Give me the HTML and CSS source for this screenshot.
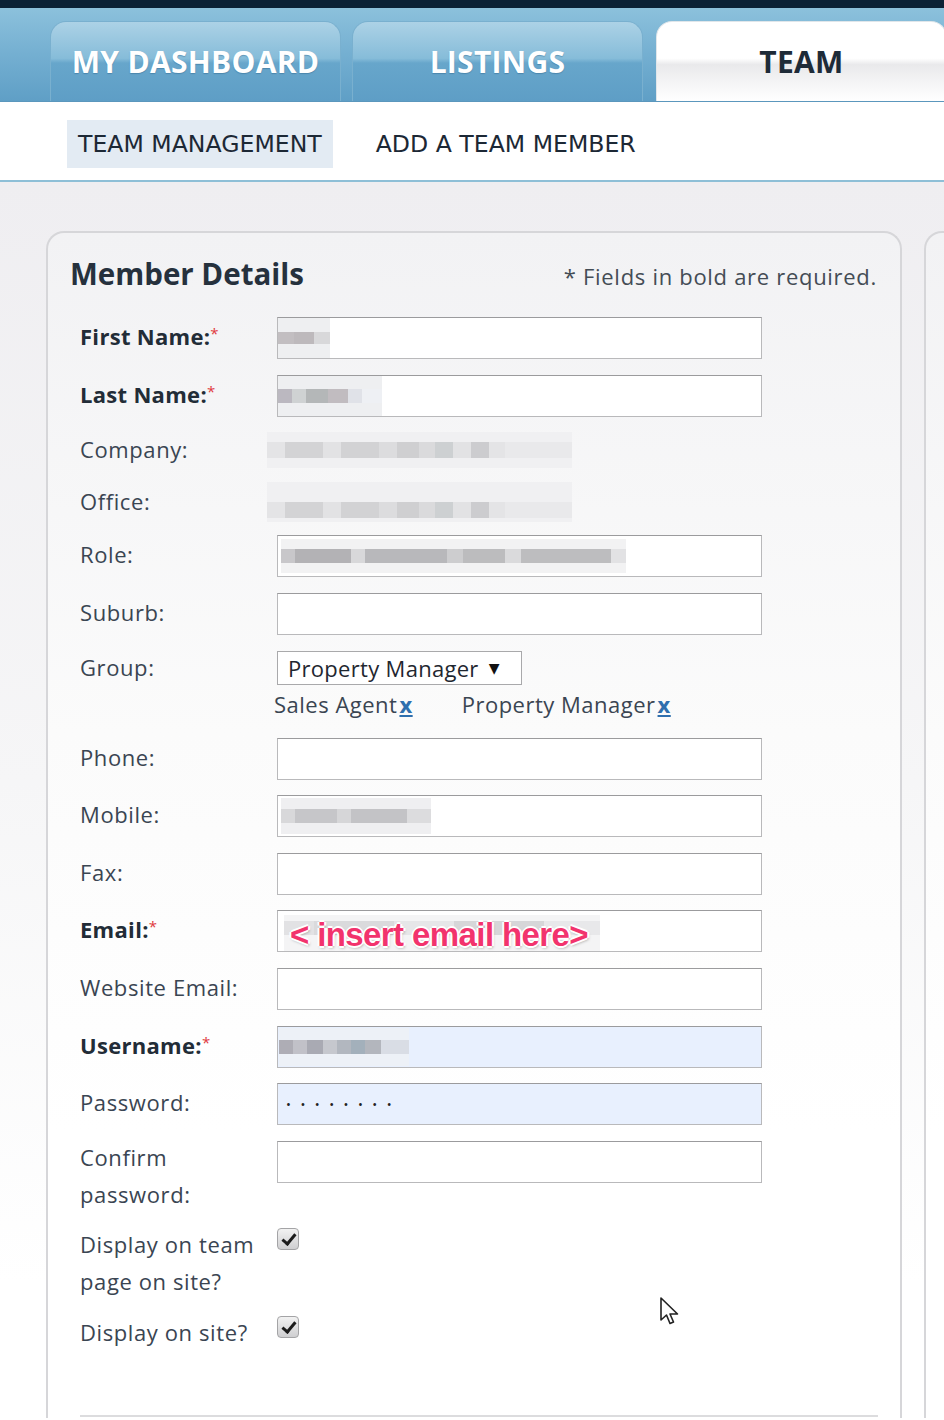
FILE: index.html
```html
<!DOCTYPE html>
<html>
<head>
    <title>Team - Member Details</title>
    <meta name="viewport" content="width=device-width, initial-scale=1">
    <link rel="stylesheet" href="styles.css">
</head>
<body>
    <div class="topbar"></div>

    <nav class="tabs">
        <a class="tab">MY DASHBOARD</a>
        <a class="tab">LISTINGS</a>
        <a class="tab active">TEAM</a>
    </nav>

    <nav class="subnav">
        <a class="subnav-item current">TEAM MANAGEMENT</a>
        <a class="subnav-item">ADD A TEAM MEMBER</a>
    </nav>

    <main class="content">
        <section class="card">
            <div class="card-head">
                <h2>Member Details</h2>
                <span class="note">* Fields in bold are required.</span>
            </div>

            <div class="form">
                <label class="req">First Name:<em>*</em></label>
                <div class="field"><span class="mosaic mosaic-first"></span></div>

                <label class="req">Last Name:<em>*</em></label>
                <div class="field"><span class="mosaic mosaic-last"></span></div>

                <label class="text-row">Company:</label>
                <div class="plain"><span class="mosaic mosaic-company"></span></div>

                <label class="text-row">Office:</label>
                <div class="plain"><span class="mosaic mosaic-office"></span></div>

                <label>Role:</label>
                <div class="field"><span class="mosaic mosaic-role"></span></div>

                <label>Suburb:</label>
                <div class="field"></div>

                <label class="group-label">Group:</label>
                <div class="group">
                    <div class="select">Property Manager <span class="arrow">&#9660;</span></div>
                    <div class="tags">
                        <span class="tag">Sales Agent<a>x</a></span>
                        <span class="tag">Property Manager<a>x</a></span>
                    </div>
                </div>

                <label>Phone:</label>
                <div class="field"></div>

                <label>Mobile:</label>
                <div class="field"><span class="mosaic mosaic-mobile"></span></div>

                <label>Fax:</label>
                <div class="field"></div>

                <label class="req">Email:<em>*</em></label>
                <div class="field">
                    <span class="mosaic mosaic-email"></span>
                    <span class="annotation">&lt; insert email here&gt;</span>
                </div>

                <label>Website Email:</label>
                <div class="field"></div>

                <label class="req">Username:<em>*</em></label>
                <div class="field autofill"><span class="mosaic mosaic-user"></span></div>

                <label>Password:</label>
                <div class="field autofill"><span class="dots">&bull;&bull;&bull;&bull;&bull;&bull;&bull;&bull;</span></div>

                <label class="multi">Confirm<br>password:</label>
                <div class="field"></div>

                <label class="multi">Display on team<br>page on site?</label>
                <div><span class="check"></span></div>

                <label class="multi">Display on site?</label>
                <div><span class="check"></span></div>
            </div>

            <div class="card-foot"></div>
        </section>

        <section class="card card-side"></section>
    </main>

    <svg class="cursor" width="24" height="32" viewBox="0 0 24 32">
        <path d="M2 2 L2 24 L7.5 19 L11 27.5 L14.5 26 L11 18 L18.5 18 Z" fill="#fff" stroke="#222" stroke-width="1.6" stroke-linejoin="round"/>
    </svg>
</body>
</html>
```

FILE: styles.css
```css
body {
    margin: 0;
    width: 944px;
    height: 1420px;
    overflow: hidden;
    font-family: "Open Sans", "DejaVu Sans", sans-serif;
    color: #3a4552;
    background: #fff;
    position: relative;
}
.topbar {
    height: 8px;
    background: #0b2236;
}

/* main tabs */
.tabs {
    display: flex;
    gap: 11px;
    height: 94px;
    padding-left: 50px;
    align-items: flex-end;
    background: linear-gradient(#8cc1dc, #74afd1 50%, #5f9fc6);
    border-bottom: 1px solid #5b97bd;
    box-sizing: border-box;
    overflow: hidden;
}
.tab {
    flex: 0 0 291px;
    height: 80px;
    box-sizing: border-box;
    border: 1px solid #79b0cf;
    border-bottom: none;
    border-radius: 16px 16px 0 0;
    background: linear-gradient(#acd2e6 0%, #86bcd9 46%, #67a6cb 52%, #5e9ec6 100%);
    color: #fff;
    font-weight: 700;
    font-size: 30px;
    letter-spacing: 0.3px;
    display: flex;
    align-items: center;
    justify-content: center;
    text-shadow: 0 1px 1px rgba(30, 80, 120, 0.35);
}
.tab.active {
    margin-left: 2px;
    background: linear-gradient(#fff 0%, #fff 46%, #e9e9eb 54%, #f6f6f7 80%, #fff 100%);
    border-color: #e0e6ea;
    color: #1e2b38;
    text-shadow: none;
}

/* sub navigation */
.subnav {
    height: 80px;
    display: flex;
    align-items: center;
    gap: 32px;
    padding: 6px 0 0 67px;
    background: #fff;
    border-bottom: 2px solid #8ebfd7;
    box-sizing: border-box;
}
.subnav-item {
    font-family: "DejaVu Sans", sans-serif;
    font-size: 23.6px;
    line-height: 26px;
    color: #1c2835;
    padding: 11px 11px;
}
.subnav-item.current {
    background: #e3ebf3;
}

/* content */
.content {
    display: flex;
    gap: 22px;
    padding: 49px 0 0 46px;
    height: 1236px;
    box-sizing: border-box;
    background: linear-gradient(#efeef1, #f6f6f7 600px, #fff 1100px);
}
.card {
    flex: 0 0 856px;
    box-sizing: border-box;
    border: 2px solid #d6d6d9;
    border-bottom: none;
    border-radius: 18px 18px 0 0;
    background: linear-gradient(#f2f2f4, #fbfbfb 500px, #fff 900px);
    padding: 18px 22px 0 22px;
}
.card-side {
    flex-basis: 300px;
}
.card-head {
    display: flex;
    justify-content: space-between;
    align-items: baseline;
    height: 46px;
}
.card-head h2 {
    margin: 0;
    font-size: 29.5px;
    line-height: 46px;
    font-weight: 700;
    color: #26313d;
}
.note {
    font-size: 22px;
    color: #444c55;
    letter-spacing: 0.7px;
    margin-right: 1px;
}

/* form grid */
.form {
    display: grid;
    grid-template-columns: 197px 485px;
    row-gap: 15.6px;
    margin-top: 20px;
    padding-left: 10px;
    align-items: start;
}
.form label {
    font-size: 22px;
    line-height: 38px;
    color: #3a4552;
    letter-spacing: 0.6px;
}
.form label.req {
    font-weight: 700;
    color: #222c37;
    letter-spacing: 0.3px;
}
.form label em {
    color: #e0393e;
    font-style: normal;
    font-weight: 400;
    font-size: 15px;
    line-height: 0;
    position: relative;
    top: -6px;
}
.form label.text-row {
    line-height: 34px;
}
.form label.multi {
    line-height: 37px;
    margin-top: -2px;
}
.form label.group-label {
    line-height: 32px;
}
.field {
    height: 42px;
    box-sizing: border-box;
    border: 1px solid #b9b9bb;
    border-top-color: #9b9b9d;
    background: #fff;
    position: relative;
    display: flex;
    align-items: center;
}
.field.autofill {
    background: #e8f0fe;
}
.plain {
    height: 36px;
    margin-left: -10px;
}
.dots {
    padding-left: 8px;
    font-size: 13px;
    letter-spacing: 9.5px;
    color: #222;
}

/* pixelated placeholders */
.mosaic {
    display: block;
    background-color: #eeeff1;
}
.mosaic-first {
    width: 52px;
    height: 40px;
    background-image: linear-gradient(to right, #c2bec1 0 16px, #bdb9bc 16px 36px, #d8d8da 36px);
    background-size: 100% 12px;
    background-position: 0 14px;
    background-repeat: no-repeat;
}
.mosaic-last {
    width: 104px;
    height: 40px;
    background-image: linear-gradient(to right, #bbb8c0 0 14px, #cfd2d3 14px 28px, #b4b7b8 28px 50px, #c1bcc0 50px 70px, #e0e2e8 70px 84px, #eef0f4 84px);
    background-size: 100% 14px;
    background-position: 0 13px;
    background-repeat: no-repeat;
}
.mosaic-company, .mosaic-office {
    width: 305px;
    height: 36px;
    background-color: #f0f0f2;
    background-image: linear-gradient(to right, #e4e4e6 0 18px, #d3d3d5 18px 56px, #e2e2e4 56px 74px, #d2d2d4 74px 112px, #dcdcde 112px 130px, #cfcfd1 130px 152px, #dadadc 152px 168px, #cdd0d2 168px 186px, #e2e2e4 186px 204px, #cccccf 204px 222px, #e4e4e6 222px 238px, #e9e9eb 238px 305px);
    background-size: 100% 16px;
    background-position: 0 10px;
    background-repeat: no-repeat;
}
.mosaic-office {
    margin-top: -2px;
    height: 40px;
    background-position: 0 20px;
}
.mosaic-role {
    width: 345px;
    height: 34px;
    margin-left: 3px;
    background-color: #f2f2f3;
    background-image: linear-gradient(to right, #c8c7ca 0 14px, #b3b2b5 14px 70px, #d8d8da 70px 84px, #b8b8bb 84px 166px, #cdcdcf 166px 182px, #bcbcbe 182px 224px, #dadadc 224px 240px, #bdbdbf 240px 330px, #e2e2e4 330px);
    background-size: 100% 14px;
    background-position: 0 10px;
    background-repeat: no-repeat;
}
.mosaic-mobile {
    width: 150px;
    height: 36px;
    margin-left: 3px;
    background-color: #efeff1;
    background-image: linear-gradient(to right, #d8d8da 0 14px, #c6c6c9 14px 56px, #d6d6d8 56px 70px, #c3c3c6 70px 126px, #dcdcde 126px);
    background-size: 100% 14px;
    background-position: 0 11px;
    background-repeat: no-repeat;
}
.mosaic-user {
    width: 130px;
    height: 38px;
    margin-left: 1px;
    background-color: #edf1f7;
    background-image: linear-gradient(to right, #aeadb5 0 14px, #c1c1c8 14px 28px, #a9aab3 28px 44px, #c6c8ce 44px 58px, #b2b7bf 58px 72px, #a3b0bb 72px 86px, #b3b6bd 86px 102px, #d9dde5 102px);
    background-size: 100% 14px;
    background-position: 0 12px;
    background-repeat: no-repeat;
}
.mosaic-email {
    position: absolute;
    left: 6px;
    top: 4px;
    width: 316px;
    height: 36px;
    background-color: #f4f4f5;
    background-image: linear-gradient(to right, #e2e2e4 0 30px, #dadadc 30px 110px, #e6e6e8 110px 170px, #d6d6d8 170px 260px, #e8e8ea 260px);
    background-size: 100% 14px;
    background-position: 0 6px;
    background-repeat: no-repeat;
}
.annotation {
    position: absolute;
    left: 12px;
    top: 5px;
    font-family: "Liberation Sans", Arial, sans-serif;
    font-weight: 700;
    font-size: 33px;
    letter-spacing: -0.6px;
    color: #f2336d;
    text-shadow: -2px 0 0 #fff, 2px 0 0 #fff, 0 -2px 0 #fff, 0 2px 0 #fff, 1px 2px 3px rgba(0, 0, 0, 0.35);
}

/* group */
.group {
    height: 71.5px;
}
.select {
    display: inline-flex;
    align-items: center;
    height: 34px;
    width: 245px;
    box-sizing: border-box;
    border: 1px solid #a9a9ab;
    background: #fff;
    padding-left: 10px;
    font-size: 22px;
    color: #1f2730;
    letter-spacing: 0.3px;
}
.arrow {
    font-size: 14px;
    margin-left: 10px;
    color: #111;
}
.tags {
    display: flex;
    gap: 49px;
    margin-left: -3px;
    margin-top: 3px;
    font-size: 22px;
    line-height: 32px;
    color: #3a4552;
    letter-spacing: 0.5px;
}
.tag a {
    color: #2f6fae;
    text-decoration: underline;
    font-weight: 700;
    margin-left: 2px;
}

/* checkbox */
.check {
    display: block;
    width: 22px;
    height: 22px;
    box-sizing: border-box;
    border: 1px solid #a4a4a6;
    border-radius: 4px;
    background: linear-gradient(#f2f2f2, #cfcfd1);
    position: relative;
}
.check::after {
    content: "";
    position: absolute;
    left: 7px;
    top: 2px;
    width: 5px;
    height: 11px;
    border: solid #1c1c1c;
    border-width: 0 3px 3px 0;
    transform: rotate(40deg);
}

.card-foot {
    margin: 64px 0 0 10px;
    border-top: 2px solid #dcdcde;
}

.cursor {
    position: absolute;
    left: 659px;
    top: 1296px;
}
```
